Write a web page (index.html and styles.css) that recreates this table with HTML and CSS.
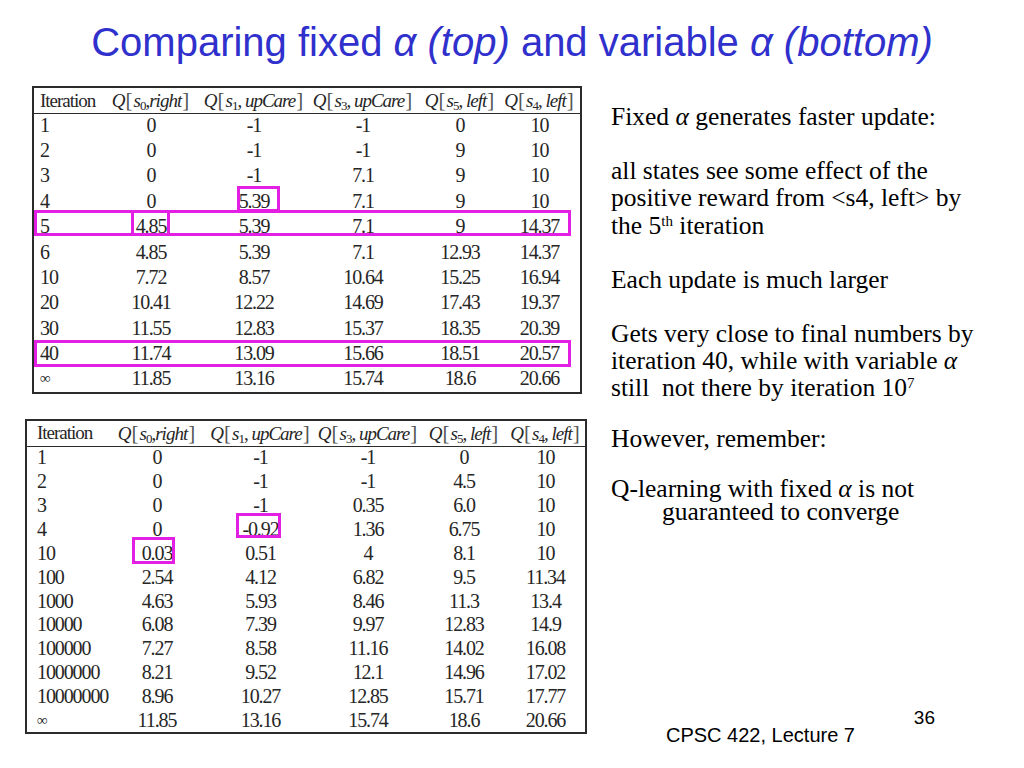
FILE: index.html
```html
<!DOCTYPE html>
<html lang="en">
<head>
<meta charset="utf-8">
<title>Comparing fixed α and variable α</title>
<link rel="stylesheet" href="styles.css">
</head>
<body>
<div class="slide">
  <h1 class="title">Comparing fixed <i>α (top)</i> and variable <i>α (bottom)</i></h1>
  <div class="content">
    <div class="left">
      <div class="tablewrap top">
        <table class="qtable qtop">
          <colgroup><col style="width:66px"><col style="width:104px"><col style="width:102px"><col style="width:116px"><col style="width:78px"><col style="width:82px"></colgroup>
          <thead>
            <tr><th>Iteration</th><th><i>Q</i><span class="br">[</span><i>s</i><sub>0</sub>,<i>right</i><span class="br">]</span></th><th><i>Q</i><span class="br">[</span><i>s</i><sub>1</sub>, <i>upCare</i><span class="br">]</span></th><th><i>Q</i><span class="br">[</span><i>s</i><sub>3</sub>, <i>upCare</i><span class="br">]</span></th><th><i>Q</i><span class="br">[</span><i>s</i><sub>5</sub>, <i>left</i><span class="br">]</span></th><th><i>Q</i><span class="br">[</span><i>s</i><sub>4</sub>, <i>left</i><span class="br">]</span></th></tr>
          </thead>
          <tbody>
            <tr><td>1</td><td>0</td><td>-1</td><td>-1</td><td>0</td><td>10</td></tr>
            <tr><td>2</td><td>0</td><td>-1</td><td>-1</td><td>9</td><td>10</td></tr>
            <tr><td>3</td><td>0</td><td>-1</td><td>7.1</td><td>9</td><td>10</td></tr>
            <tr><td>4</td><td>0</td><td>5.39</td><td>7.1</td><td>9</td><td>10</td></tr>
            <tr><td>5</td><td>4.85</td><td>5.39</td><td>7.1</td><td>9</td><td>14.37</td></tr>
            <tr><td>6</td><td>4.85</td><td>5.39</td><td>7.1</td><td>12.93</td><td>14.37</td></tr>
            <tr><td>10</td><td>7.72</td><td>8.57</td><td>10.64</td><td>15.25</td><td>16.94</td></tr>
            <tr><td>20</td><td>10.41</td><td>12.22</td><td>14.69</td><td>17.43</td><td>19.37</td></tr>
            <tr><td>30</td><td>11.55</td><td>12.83</td><td>15.37</td><td>18.35</td><td>20.39</td></tr>
            <tr><td>40</td><td>11.74</td><td>13.09</td><td>15.66</td><td>18.51</td><td>20.57</td></tr>
            <tr><td class="inf">∞</td><td>11.85</td><td>13.16</td><td>15.74</td><td>18.6</td><td>20.66</td></tr>
          </tbody>
        </table>
        <div class="mark m-t1"></div>
        <div class="mark m-t2"></div>
        <div class="mark m-t3"></div>
        <div class="mark m-t4"></div>
      </div>

      <div class="tablewrap bottom">
        <table class="qtable qbot">
          <colgroup><col style="width:81px"><col style="width:100px"><col style="width:107px"><col style="width:108px"><col style="width:84px"><col style="width:80px"></colgroup>
          <thead>
            <tr><th>Iteration</th><th><i>Q</i><span class="br">[</span><i>s</i><sub>0</sub>,<i>right</i><span class="br">]</span></th><th><i>Q</i><span class="br">[</span><i>s</i><sub>1</sub>, <i>upCare</i><span class="br">]</span></th><th><i>Q</i><span class="br">[</span><i>s</i><sub>3</sub>, <i>upCare</i><span class="br">]</span></th><th><i>Q</i><span class="br">[</span><i>s</i><sub>5</sub>, <i>left</i><span class="br">]</span></th><th><i>Q</i><span class="br">[</span><i>s</i><sub>4</sub>, <i>left</i><span class="br">]</span></th></tr>
          </thead>
          <tbody>
            <tr><td>1</td><td>0</td><td>-1</td><td>-1</td><td>0</td><td>10</td></tr>
            <tr><td>2</td><td>0</td><td>-1</td><td>-1</td><td>4.5</td><td>10</td></tr>
            <tr><td>3</td><td>0</td><td>-1</td><td>0.35</td><td>6.0</td><td>10</td></tr>
            <tr><td>4</td><td>0</td><td>-0.92</td><td>1.36</td><td>6.75</td><td>10</td></tr>
            <tr><td>10</td><td>0.03</td><td>0.51</td><td>4</td><td>8.1</td><td>10</td></tr>
            <tr><td>100</td><td>2.54</td><td>4.12</td><td>6.82</td><td>9.5</td><td>11.34</td></tr>
            <tr><td>1000</td><td>4.63</td><td>5.93</td><td>8.46</td><td>11.3</td><td>13.4</td></tr>
            <tr><td>10000</td><td>6.08</td><td>7.39</td><td>9.97</td><td>12.83</td><td>14.9</td></tr>
            <tr><td>100000</td><td>7.27</td><td>8.58</td><td>11.16</td><td>14.02</td><td>16.08</td></tr>
            <tr><td>1000000</td><td>8.21</td><td>9.52</td><td>12.1</td><td>14.96</td><td>17.02</td></tr>
            <tr><td>10000000</td><td>8.96</td><td>10.27</td><td>12.85</td><td>15.71</td><td>17.77</td></tr>
            <tr><td class="inf">∞</td><td>11.85</td><td>13.16</td><td>15.74</td><td>18.6</td><td>20.66</td></tr>
          </tbody>
        </table>
        <div class="mark m-b1"></div>
        <div class="mark m-b2"></div>
      </div>
    </div>

    <div class="right">
      <div class="notes">
        <p class="p1">Fixed <i>α</i> generates faster update:</p>
        <p class="p2">all states see some effect of the positive reward from &lt;s4, left&gt; by the 5<sup>th</sup> iteration</p>
        <p class="p3">Each update is much larger</p>
        <p class="p4">Gets very close to final numbers by iteration 40, while with variable <i>α</i> still&nbsp; not there by iteration 10<sup>7</sup></p>
        <p class="p5">However, remember:</p>
        <p class="p6">Q-learning with fixed <i>α</i> is not<span class="indent">guaranteed to converge</span></p>
      </div>
      <div class="footer">
        <div class="pagenum">36</div>
        <div class="course">CPSC 422, Lecture 7</div>
      </div>
    </div>
  </div>
</div>
</body>
</html>
```

FILE: styles.css
```css
html, body {
  margin: 0;
  padding: 0;
  background: #ffffff;
}

.slide {
  width: 1024px;
  height: 768px;
  display: flex;
  flex-direction: column;
  background: #ffffff;
  overflow: hidden;
}

.title {
  margin: 0;
  padding-top: 19px;
  height: 46px;
  line-height: 46px;
  text-align: center;
  font-family: "Liberation Sans", Arial, sans-serif;
  font-weight: normal;
  font-size: 40px;
  color: #3030cc;
  white-space: nowrap;
}

.title i {
  font-style: italic;
}

.content {
  flex: 1;
  display: flex;
  min-height: 0;
}

.left {
  width: 560px;
  padding-left: 25px;
  display: flex;
  flex-direction: column;
}

.tablewrap {
  position: relative;
}

.tablewrap.top {
  margin-top: 21px;
  margin-left: 7px;
  width: 548px;
}

.tablewrap.bottom {
  margin-top: 25px;
  width: 560px;
}

.qtable {
  border-collapse: collapse;
  table-layout: fixed;
  border: 2px solid #2b2b2b;
  font-family: "Liberation Serif", "Times New Roman", serif;
  font-size: 20px;
  letter-spacing: -1.1px;
  color: #262626;
}

.qtop {
  width: 548px;
}

.qbot {
  width: 560px;
}

.qtable th {
  font-weight: normal;
  font-size: 19px;
  letter-spacing: -1px;
  text-align: center;
  padding: 0;
  border-bottom: 1px solid #2b2b2b;
  white-space: nowrap;
}

.qtable th:first-child,
.qtable td:first-child {
  text-align: left;
}

.qtop th:first-child,
.qtop td:first-child {
  padding-left: 6px;
}

.qbot th:first-child,
.qbot td:first-child {
  padding-left: 10px;
}

.qtop th {
  height: 21px;
}

.qbot th {
  height: 22px;
}

.qtable td {
  box-sizing: border-box;
  text-align: center;
  padding: 0 0 2px;
  line-height: 20px;
  white-space: nowrap;
}

.qtop td {
  height: 25.4px;
  padding-bottom: 3px;
}

.qbot td {
  height: 23.9px;
}

.qtable td.inf {
  font-size: 15px;
}

.qtable th i {
  font-style: italic;
}

.qtable th sub {
  font-size: 13px;
  vertical-align: -3px;
  line-height: 0;
}

.qtable .br {
  color: #555;
  font-size: 21px;
  letter-spacing: 0;
  padding: 0 1px;
}

.mark {
  position: absolute;
  border: 3px solid #e21fe2;
  box-sizing: border-box;
}

.m-t1 { left: 205px; top: 100px; width: 43px; height: 26px; }
.m-t2 { left: 2px; top: 124px; width: 537px; height: 26px; }
.m-t3 { left: 99px; top: 124px; width: 39px; height: 26px; }
.m-t4 { left: 2px; top: 254px; width: 537px; height: 27px; }

.m-b1 { left: 211px; top: 94px; width: 45px; height: 25px; }
.m-b2 { left: 107px; top: 118px; width: 43px; height: 27px; }

.right {
  flex: 1;
  margin-left: 26px;
  padding-top: 38px;
  display: flex;
  flex-direction: column;
  font-family: "Liberation Serif", "Times New Roman", serif;
  color: #000000;
}

.notes {
  width: 375px;
  font-size: 25.5px;
  line-height: 27.2px;
}

.notes p {
  margin: 0;
}

.notes .p2,
.notes .p3,
.notes .p4 {
  margin-top: 27px;
}

.notes .p5 {
  margin-top: 23px;
}

.notes .p6 {
  margin-top: 25px;
  line-height: 23px;
}

.notes .indent {
  display: block;
  padding-left: 51px;
}

.notes sup {
  font-size: 15px;
  line-height: 0;
  vertical-align: 8px;
}

.footer {
  margin-top: auto;
  padding-bottom: 22px;
  font-family: "Liberation Sans", Arial, sans-serif;
  color: #000000;
}

.pagenum {
  text-align: right;
  padding-right: 89px;
  font-size: 19px;
  line-height: 20px;
}

.course {
  margin-top: -4px;
  padding-left: 55px;
  font-size: 20px;
  line-height: 22px;
}
```
